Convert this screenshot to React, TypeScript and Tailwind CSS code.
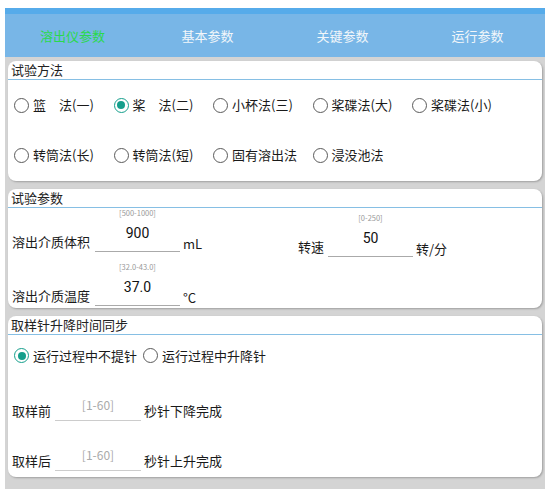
import React from "react";

const font = { fontFamily: '"Noto Sans CJK SC", "Noto Sans", sans-serif' };

function Radio({ checked, label }: { checked?: boolean; label: string }) {
  return (
    <div className="flex items-center gap-[4px]">
      <span
        className={
          checked
            ? "w-[15px] h-[15px] rounded-full border-[1.5px] border-[#159f8c] flex items-center justify-center"
            : "w-[15px] h-[15px] rounded-full border-[1.5px] border-[#5a5a5a] flex items-center justify-center"
        }
      >
        {checked ? <span className="w-[8px] h-[8px] rounded-full bg-[#159f8c]" /> : null}
      </span>
      <span className="text-[13px] leading-[18px] text-[#1a1a1a] whitespace-pre">{label}</span>
    </div>
  );
}

function Card({ title, children, className }: { title: string; children: React.ReactNode; className?: string }) {
  return (
    <div className={"bg-white rounded-[8px] shadow-[1px_1px_2px_rgba(0,0,0,0.25)] " + (className ?? "")}>
      <div className="h-[19px] pl-[3px] border-b-[1.5px] border-[#86bfe4] text-[13px] leading-[18px] text-[#222]">
        {title}
      </div>
      {children}
    </div>
  );
}

function Field({ hint, value, label, unit, labelW }: { hint: string; value: string; label: string; unit: string; labelW: string }) {
  return (
    <div className="flex items-end">
      <div className={"text-[13px] leading-[20px] text-[#1a1a1a] " + labelW}>{label}</div>
      <div className="flex flex-col w-[85px]">
        <div className="text-[7.5px] leading-[10px] text-[#999] text-center">{hint}</div>
        <div className="h-[34px] border-b-[1.5px] border-[#aaa] flex items-center justify-center pb-[3px] text-[14px] text-[#111]" style={{ fontFamily: 'Roboto, "Noto Sans", sans-serif' }}>
          {value}
        </div>
      </div>
      <div className="pl-[3px] text-[13px] leading-[16px] text-[#1a1a1a]">{unit}</div>
    </div>
  );
}

function TimeRow({ label, unit }: { label: string; unit: string }) {
  return (
    <div className="h-[50px] flex items-end pl-[4px] pb-[5px]">
      <div className="text-[13px] leading-[20px] text-[#1a1a1a] w-[43px]">{label}</div>
      <div className="w-[86px] h-[30px] border-b-[1px] border-[#ccc] flex justify-center">
        <span className="mt-[6px] text-[12px] leading-[16px] text-[#aaa]">[1-60]</span>
      </div>
      <div className="pl-[3px] text-[13px] leading-[20px] text-[#1a1a1a]">{unit}</div>
    </div>
  );
}

export default function App() {
  return (
    <div className="w-[553px] h-[496px] bg-white pt-[8px] pl-[5px]" style={font}>
      <div className="w-[540px]">
        <div className="h-[6px] bg-[#56abea]" />
        <div className="h-[43px] bg-[#78b6e7] grid grid-cols-4 items-center text-[13px] text-center">
          <div className="text-[#2ad94c]">溶出仪参数</div>
          <div className="text-[#f2f6fa]">基本参数</div>
          <div className="text-[#f2f6fa]">关键参数</div>
          <div className="text-[#f2f6fa]">运行参数</div>
        </div>
        <div className="bg-[#d4d4d4] h-[432px] pt-[4px] px-[3px] flex flex-col gap-[8px]">
          <Card title="试验方法" className="h-[120px]">
            <div className="pl-[6px]">
              <div className="h-[50px] flex items-center">
                <div className="w-[99.5px]"><Radio label={"篮　法(一)"} /></div>
                <div className="w-[99.5px]"><Radio checked label={"桨　法(二)"} /></div>
                <div className="w-[99.5px]"><Radio label="小杯法(三)" /></div>
                <div className="w-[99.5px]"><Radio label="桨碟法(大)" /></div>
                <div className="w-[99.5px]"><Radio label="桨碟法(小)" /></div>
              </div>
              <div className="h-[50px] flex items-center">
                <div className="w-[99.5px]"><Radio label="转筒法(长)" /></div>
                <div className="w-[99.5px]"><Radio label="转筒法(短)" /></div>
                <div className="w-[99.5px]"><Radio label="固有溶出法" /></div>
                <div className="w-[99.5px]"><Radio label="浸没池法" /></div>
              </div>
            </div>
          </Card>
          <Card title="试验参数" className="h-[119px]">
            <div className="pl-[4px]">
              <div className="h-[49px] flex">
                <div className="w-[286px]">
                  <Field hint="[500-1000]" value="900" label="溶出介质体积" unit="mL" labelW="w-[83px]" />
                </div>
                <Field hint="[0-250]" value="50" label="转速" unit="转/分" labelW="w-[30px]" />
              </div>
              <div className="h-[49px] flex">
                <Field hint="[32.0-43.0]" value="37.0" label="溶出介质温度" unit="°C" labelW="w-[83px]" />
              </div>
            </div>
          </Card>
          <Card title="取样针升降时间同步" className="h-[161px]">
            <div className="h-[41px] flex items-center pl-[6px] gap-[6px]">
              <Radio checked label="运行过程中不提针" />
              <Radio label="运行过程中升降针" />
            </div>
            <TimeRow label="取样前" unit="秒针下降完成" />
            <TimeRow label="取样后" unit="秒针上升完成" />
          </Card>
        </div>
      </div>
    </div>
  );
}
